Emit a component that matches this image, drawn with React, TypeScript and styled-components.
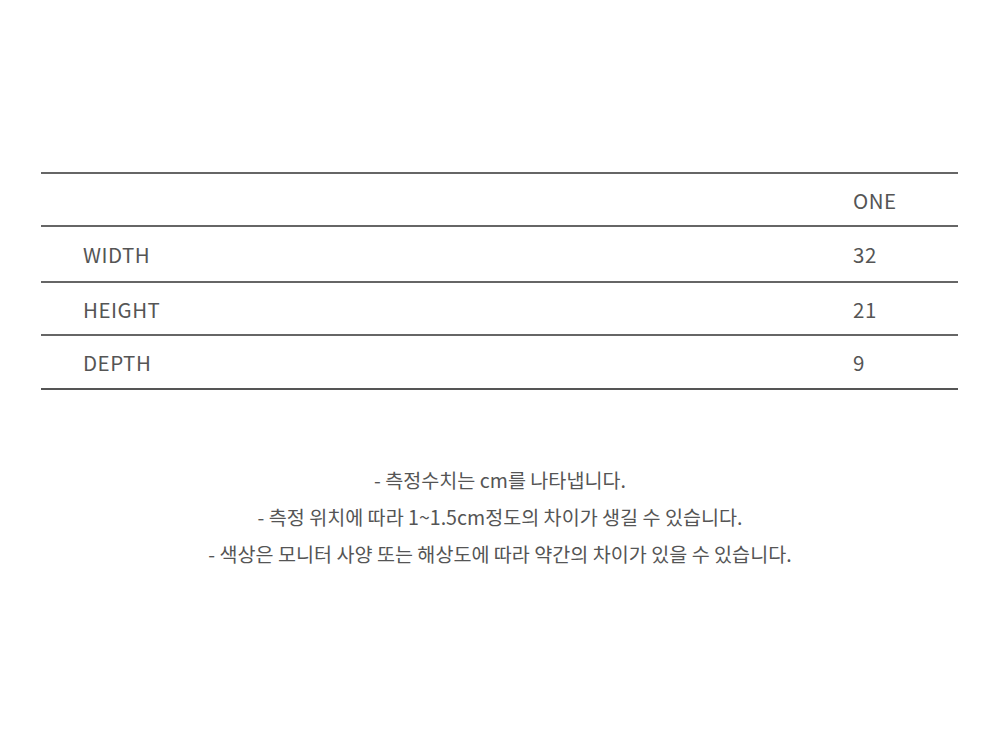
import React from "react";
import styled, { createGlobalStyle } from "styled-components";

const Global = createGlobalStyle`
  html, body { margin: 0; padding: 0; background: #fff; }
  body { font-family: "Noto Sans CJK KR", "Noto Sans", sans-serif; color: #555; }
`;

const Page = styled.div`
  width: 1000px;
  height: 738px;
  padding-top: 172px;
  box-sizing: border-box;
`;

const Table = styled.div`
  margin-left: 41px;
  width: 917px;
  border-bottom: 2px solid #555;
`;

const Row = styled.div<{ $h: number }>`
  display: grid;
  grid-template-columns: 812px 1fr;
  height: ${(p) => p.$h}px;
  align-items: center;
  border-top: 2px solid #666;
  box-sizing: border-box;
  font-size: 20.5px;
  color: #555;
  letter-spacing: 0.5px;
`;

const Label = styled.div`
  padding-left: 42px;
`;

const Value = styled.div``;

const Notes = styled.div`
  margin-top: 71px;
  text-align: center;
  font-size: 19.6px;
  line-height: 37px;
  color: #555;
`;

const rows = [
  { label: "", value: "ONE", h: 53 },
  { label: "WIDTH", value: "32", h: 56 },
  { label: "HEIGHT", value: "21", h: 53 },
  { label: "DEPTH", value: "9", h: 54 },
];

export default function App() {
  return (
    <Page>
      <Global />
      <Table>
        {rows.map((r) => (
          <Row key={r.value} $h={r.h}>
            <Label>{r.label}</Label>
            <Value>{r.value}</Value>
          </Row>
        ))}
      </Table>
      <Notes>
        <div>- 측정수치는 cm를 나타냅니다.</div>
        <div>- 측정 위치에 따라 1~1.5cm정도의 차이가 생길 수 있습니다.</div>
        <div>- 색상은 모니터 사양 또는 해상도에 따라 약간의 차이가 있을 수 있습니다.</div>
      </Notes>
    </Page>
  );
}
